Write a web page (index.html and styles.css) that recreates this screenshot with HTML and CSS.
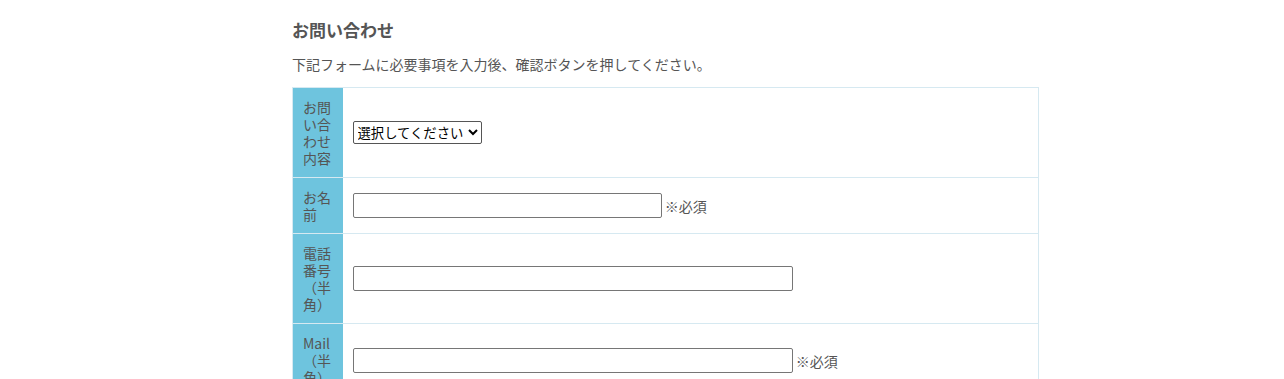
FILE: index.html
```html
<!doctype html>
<html lang="ja">
	<head>
		<meta charset="UTF-8">
		<title>お問い合わせ</title>
		<link rel="stylesheet" href="styles.css">
	</head>

	<body>
		<div class="container">
			<h1>お問い合わせ</h1>
			<p class="lead">下記フォームに必要事項を入力後、確認ボタンを押してください。</p>

			<form class="contact">
				<table class="form-table">
					<tr>
						<th>お問い合わせ内容</th>
						<td>
							<select name="type">
								<option>選択してください</option>
								<option>サービスについて</option>
								<option>その他</option>
							</select>
						</td>
					</tr>
					<tr>
						<th>お名前</th>
						<td><input type="text" name="name" class="short"> <span class="req">※必須</span></td>
					</tr>
					<tr>
						<th>電話番号（半角）</th>
						<td><input type="text" name="tel" class="long"></td>
					</tr>
					<tr>
						<th>Mail（半角）</th>
						<td><input type="text" name="mail" class="long"> <span class="req">※必須</span></td>
					</tr>
				</table>
			</form>
		</div>
	</body>
</html>
```

FILE: styles.css
```css
* {
	padding: 0;
	margin: 0;
	box-sizing: border-box;
}
body {
	background-color: #fff;
	color: #555;
	font-size: 14px;
	font-family: "Noto Sans CJK JP", "Noto Sans", sans-serif;
}
.container {
	width: 747px;
	margin-left: 292px;
	padding-top: 17px;
}
h1 {
	font-size: 17px;
	font-weight: bold;
	line-height: 26px;
	margin-bottom: 10px;
}
.lead {
	line-height: 22px;
	margin-bottom: 12px;
}
.form-table {
	width: 100%;
	border-collapse: collapse;
	border: 1px solid #d6e9f1;
}
.form-table th {
	width: 50px;
	padding: 11px 10px 10px;
	background-color: #6ec4de;
	color: #555;
	font-weight: normal;
	text-align: left;
	line-height: 17px;
	border-bottom: 1px solid #d6e9f1;
	vertical-align: middle;
}
.form-table td {
	padding: 10px 10px;
	border-bottom: 1px solid #d6e9f1;
	vertical-align: middle;
}
select {
	font-family: "Noto Sans CJK JP", sans-serif;
	font-size: 13.33px;
	color: #000;
	height: 23px;
	border: 1px solid #555;
	border-radius: 2px;
	background-color: #fff;
}
input[type="text"] {
	height: 25px;
	border: 1px solid #767676;
	border-radius: 2px;
	vertical-align: middle;
}
.short {
	width: 309px;
}
.long {
	width: 440px;
}
.req {
	vertical-align: middle;
}
```
